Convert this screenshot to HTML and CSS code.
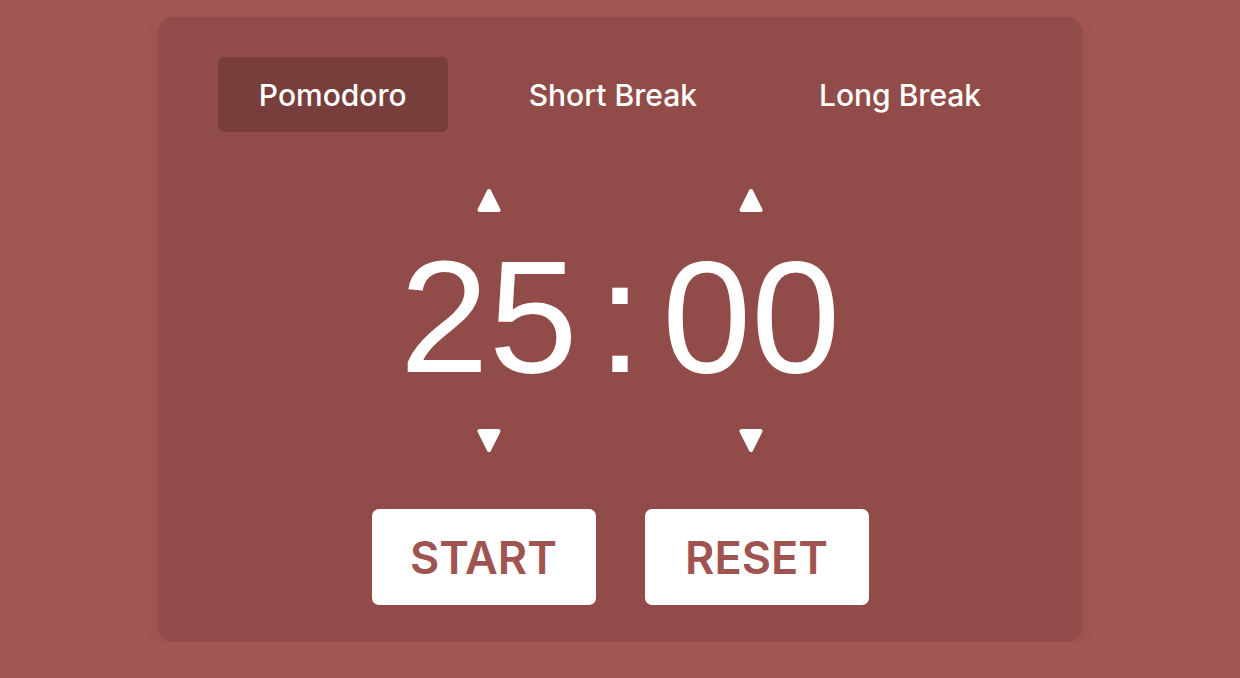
FILE: index.html
```html
<!DOCTYPE html>
<html>
<head>
<meta charset="utf-8">
<link rel="stylesheet" href="styles.css">
</head>
<body>
<div class="card">
  <div class="tabs">
    <button class="tab active">Pomodoro</button>
    <button class="tab">Short Break</button>
    <button class="tab">Long Break</button>
  </div>
  <div class="timer">
    <div class="unit">
      <svg class="arrow up" width="24" height="25" viewBox="0 0 24 25"><polygon points="12,3 21.5,22 2.5,22" fill="#fff" stroke="#fff" stroke-width="4" stroke-linejoin="round"/></svg>
      <span class="digits">25</span>
      <svg class="arrow down" width="24" height="25" viewBox="0 0 24 25"><polygon points="2.5,3 21.5,3 12,22" fill="#fff" stroke="#fff" stroke-width="4" stroke-linejoin="round"/></svg>
    </div>
    <div class="colon">:</div>
    <div class="unit">
      <svg class="arrow up" width="24" height="25" viewBox="0 0 24 25"><polygon points="12,3 21.5,22 2.5,22" fill="#fff" stroke="#fff" stroke-width="4" stroke-linejoin="round"/></svg>
      <span class="digits">00</span>
      <svg class="arrow down" width="24" height="25" viewBox="0 0 24 25"><polygon points="2.5,3 21.5,3 12,22" fill="#fff" stroke="#fff" stroke-width="4" stroke-linejoin="round"/></svg>
    </div>
  </div>
  <div class="controls">
    <button class="ctrl">START</button>
    <button class="ctrl">RESET</button>
  </div>
</div>
</body>
</html>
```
FILE: styles.css
```css
html, body {
  margin: 0;
  padding: 0;
  background: #a25651;
  font-family: Inter, "Liberation Sans", sans-serif;
  color: #fff;
}
body {
  display: flex;
  justify-content: center;
  padding-top: 17px;
}
.card {
  width: 924px;
  height: 625px;
  box-sizing: border-box;
  background: #914c49;
  border-radius: 16px;
  box-shadow: 0 4px 14px rgba(0,0,0,0.08);
  padding: 40px 60px 37px;
  display: flex;
  flex-direction: column;
  align-items: center;
}
.tabs {
  display: flex;
  gap: 40px;
}
.tab {
  font-family: inherit;
  font-size: 30px;
  font-weight: 500;
  white-space: nowrap;
  color: #fff;
  background: transparent;
  border: 0;
  border-radius: 6px;
  height: 75px;
  padding: 0 41px;
}
.tab.active {
  background: #773e3b;
}
.timer {
  display: flex;
  align-items: flex-start;
  margin-top: 56px;
  gap: 20px;
}
.unit {
  display: flex;
  flex-direction: column;
  align-items: center;
}
.arrow {
  display: block;
}
.arrow.up {
  margin-bottom: 14px;
}
.arrow.down {
  margin-top: 21px;
}
.digits,
.colon {
  font-family: "Liberation Sans", sans-serif;
  font-size: 160px;
  line-height: 180px;
}
.colon {
  margin-top: 39px;
}
.controls {
  display: flex;
  gap: 49px;
  margin-top: 56px;
}
.ctrl {
  font-family: inherit;
  width: 224px;
  height: 96px;
  border: 0;
  border-radius: 7px;
  background: #fff;
  color: #9f5451;
  font-size: 45px;
  font-weight: 600;
}
```
